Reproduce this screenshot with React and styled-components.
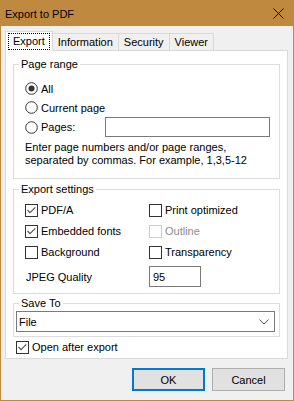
import React from 'react';
import styled, { createGlobalStyle } from 'styled-components';

const Global = createGlobalStyle`
  html, body { margin: 0; padding: 0; background: #ffffff; }
  body { font-family: "Liberation Sans", Arial, sans-serif; font-size: 11px; color: #000; }
  *, *::before, *::after { box-sizing: border-box; }
`;

const Window = styled.div`
  width: 294px;
  height: 401px;
  border: 1px solid #bf8a3f;
  background: #f0f0f0;
  display: flex;
  flex-direction: column;
`;

const TitleBar = styled.div`
  height: 25px;
  flex: none;
  background: #bf8a3f;
  display: flex;
  align-items: center;
  justify-content: space-between;
  padding: 0 9px 0 4px;
  color: #000;
  font-size: 11px;
`;

const Body = styled.div`
  flex: 1;
  display: flex;
  flex-direction: column;
  padding: 5px 5px 0 4px;
`;

const TabRow = styled.div`
  height: 19px;
  display: flex;
  align-items: flex-end;
`;

const Tab = styled.div`
  position: relative;
  height: ${p => (p.$active ? 20 : 17)}px;
  margin-bottom: ${p => (p.$active ? -1 : 0)}px;
  margin-left: ${p => (p.$first ? 0 : -1)}px;
  z-index: ${p => (p.$active ? 1 : 0)};
  padding: ${p => (p.$active ? '0 2px' : '0 5px')};
  border: 1px solid #d9d9d9;
  border-bottom: none;
  background: ${p => (p.$active ? '#ffffff' : '#f0f0f0')};
  display: flex;
  align-items: center;
  line-height: 13px;
  white-space: nowrap;
`;

const FocusText = styled.span`
  border: 1px dotted #000;
  padding: 1px 4px 1px 4px;
`;

const Panel = styled.div`
  border: 1px solid #d9d9d9;
  background: #ffffff;
  display: flex;
  flex-direction: column;
  padding-bottom: 1px;
`;

const Group = styled.fieldset`
  margin: ${p => p.$mt}px 7px 0 7px;
  padding: 0;
  border: 1px solid #dcdcdc;
  min-width: 0;
`;

const Legend = styled.legend`
  margin-left: 5px;
  padding: 0 2px;
  line-height: 15px;
  font-size: 11px;
`;

const GroupBody = styled.div`
  padding: ${p => p.$pad};
`;

const OptionRow = styled.label`
  height: ${p => p.$h || 19}px;
  display: flex;
  align-items: center;
  gap: 3px;
  color: ${p => (p.$disabled ? '#8d8d8d' : '#000')};
  white-space: nowrap;
`;

const PagesRow = styled.div`
  height: 20px;
  display: grid;
  grid-template-columns: 80px 1fr;
  align-items: center;
`;

const TextBox = styled.div`
  height: ${p => p.$h || 20}px;
  width: ${p => (p.$w ? `${p.$w}px` : 'auto')};
  border: 1px solid #7a7a7a;
  background: #fff;
  display: flex;
  align-items: center;
  padding-left: 3px;
`;

const Hint = styled.div`
  margin-top: 4px;
  line-height: 13px;
`;

const CheckGrid = styled.div`
  display: grid;
  grid-template-columns: 124px 1fr;
  grid-auto-rows: 20px;
  row-gap: 1px;
`;

const JpegRow = styled.div`
  margin-top: 4px;
  display: grid;
  grid-template-columns: 123px 1fr;
  align-items: center;
  padding-left: 1px;
`;

const Select = styled.div`
  height: 21px;
  border: 1px solid #7a7a7a;
  background: #fff;
  display: flex;
  align-items: center;
  justify-content: space-between;
  padding: 0 5px 0 2px;
`;

const OpenRow = styled.div`
  padding-left: 10px;
`;

const ButtonRow = styled.div`
  margin-top: 9px;
  display: flex;
  justify-content: flex-end;
  gap: 7px;
  padding-right: 3px;
`;

const Button = styled.button`
  width: 73px;
  height: 23px;
  margin: 0;
  padding: 0;
  font-family: "Liberation Sans", Arial, sans-serif;
  font-size: 11px;
  color: #000;
  background: #e1e1e1;
  border: ${p => (p.$default ? '2px solid #0078d7' : '1px solid #adadad')};
`;

const BoxSvg = styled.svg`
  flex: none;
  display: block;
`;

function CheckBox({ checked, disabled }) {
  return (
    <BoxSvg width="13" height="13" viewBox="0 0 13 13">
      <rect x="0.5" y="0.5" width="12" height="12" fill="#fff" stroke={disabled ? '#cccccc' : '#333333'} />
      {checked && (
        <polyline points="2.5,6 5,8.7 10.3,3.4" fill="none" stroke="#555555" strokeWidth="1.2" />
      )}
    </BoxSvg>
  );
}

function Radio({ checked }) {
  return (
    <BoxSvg width="13" height="13" viewBox="0 0 13 13">
      <circle cx="6.5" cy="6.5" r="5.8" fill="#fff" stroke="#333333" />
      {checked && <circle cx="6.5" cy="6.5" r="3" fill="#333333" />}
    </BoxSvg>
  );
}

function Check({ label, checked, disabled }) {
  return (
    <OptionRow $h={20} $disabled={disabled}>
      <CheckBox checked={checked} disabled={disabled} />
      <span>{label}</span>
    </OptionRow>
  );
}

export default function App() {
  return (
    <>
      <Global />
      <Window>
        <TitleBar>
          <span>Export to PDF</span>
          <svg width="11" height="11" viewBox="0 0 11 11">
            <path d="M0.5 0.5 L10.5 10.5 M10.5 0.5 L0.5 10.5" stroke="#000" strokeWidth="1" fill="none" />
          </svg>
        </TitleBar>
        <Body>
          <TabRow>
            <Tab $active $first>
              <FocusText>Export</FocusText>
            </Tab>
            <Tab>Information</Tab>
            <Tab>Security</Tab>
            <Tab>Viewer</Tab>
          </TabRow>
          <Panel>
            <Group $mt={6}>
              <Legend>Page range</Legend>
              <GroupBody $pad="7px 9px 11px 11px">
                <OptionRow>
                  <Radio checked />
                  <span>All</span>
                </OptionRow>
                <OptionRow>
                  <Radio />
                  <span>Current page</span>
                </OptionRow>
                <PagesRow>
                  <OptionRow>
                    <Radio />
                    <span>Pages:</span>
                  </OptionRow>
                  <TextBox />
                </PagesRow>
                <Hint>
                  Enter page numbers and/or page ranges,
                  <br />
                  separated by commas. For example, 1,3,5-12
                </Hint>
              </GroupBody>
            </Group>
            <Group $mt={3}>
              <Legend>Export settings</Legend>
              <GroupBody $pad="3px 9px 6px 11px">
                <CheckGrid>
                  <Check label="PDF/A" checked />
                  <Check label="Print optimized" />
                  <Check label="Embedded fonts" checked />
                  <Check label="Outline" disabled />
                  <Check label="Background" />
                  <Check label="Transparency" />
                </CheckGrid>
                <JpegRow>
                  <span>JPEG Quality</span>
                  <TextBox $w={52} $h={21}>95</TextBox>
                </JpegRow>
              </GroupBody>
            </Group>
            <Group $mt={2}>
              <Legend>Save To</Legend>
              <GroupBody $pad="0 4px 4px 2px">
                <Select>
                  <span>File</span>
                  <svg width="10" height="6" viewBox="0 0 10 6">
                    <polyline points="0.5,0.5 5,5 9.5,0.5" fill="none" stroke="#555" strokeWidth="1" />
                  </svg>
                </Select>
              </GroupBody>
            </Group>
            <OpenRow>
              <Check label="Open after export" checked />
            </OpenRow>
          </Panel>
          <ButtonRow>
            <Button $default>OK</Button>
            <Button>Cancel</Button>
          </ButtonRow>
        </Body>
      </Window>
    </>
  );
}
